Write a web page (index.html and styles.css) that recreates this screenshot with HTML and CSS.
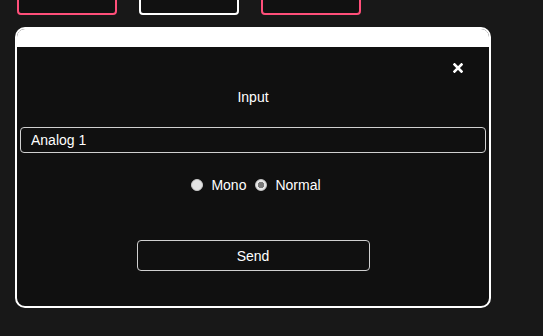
FILE: index.html
```html
<!DOCTYPE html>
<html lang="en">
<head>
    <meta charset="UTF-8">
    <meta name="viewport" content="width=device-width, initial-scale=1.0">
    <title>Input</title>
    <link rel="stylesheet" href="styles.css">
</head>
<body>

    <!-- Top tabs -->
    <nav class="tabs">
        <button class="tab"></button>
        <button class="tab active"></button>
        <button class="tab"></button>
    </nav>

    <!-- Input dialog -->
    <section class="modal">
        <div class="modal-header"></div>
        <div class="modal-body">
            <div class="close-row">
                <button class="close" aria-label="Close">
                    <svg width="10" height="10" viewBox="0 0 10 10">
                        <path d="M1.5 1.5 L8.5 8.5 M8.5 1.5 L1.5 8.5" stroke="#fff" stroke-width="2.6" stroke-linecap="square"/>
                    </svg>
                </button>
            </div>
            <p class="label">Input</p>
            <input type="text" class="field" value="Analog 1">
            <div class="radios">
                <label><input type="radio" name="mode" value="mono"> Mono</label>
                <label><input type="radio" name="mode" value="normal" checked> Normal</label>
            </div>
            <button class="send">Send</button>
        </div>
    </section>

</body>
</html>
```

FILE: styles.css
```css
/* General Styles */
body {
    margin: 0;
    font-family: 'Liberation Sans', Arial, sans-serif;
    font-size: 14px;
    background: #181818;
    color: #fff;
}

/* Tabs */
.tabs {
    display: flex;
    gap: 22px;
    margin-top: -20px;
    padding-left: 17px;
}

.tab {
    width: 100px;
    height: 35px;
    background-color: #111;
    border: 2px solid #ff4f7a;
    border-radius: 4px;
    padding: 0;
}

.tab.active {
    border-color: #fff;
}

/* Modal */
.modal {
    display: flex;
    flex-direction: column;
    width: 476px;
    height: 281px;
    box-sizing: border-box;
    margin: 12px 0 0 15px;
    border: 2px solid #fff;
    border-radius: 10px;
    background-color: #101010;
    overflow: hidden;
}

.modal-header {
    height: 18px;
    background-color: #fff;
}

.modal-body {
    flex: 1;
    display: flex;
    flex-direction: column;
    align-items: center;
    padding: 16px 3px 0;
}

.close-row {
    align-self: stretch;
    display: flex;
    justify-content: flex-end;
    padding-right: 23px;
}

.close {
    display: block;
    padding: 0;
    border: none;
    background: none;
    height: 10px;
    cursor: pointer;
}

.close svg {
    display: block;
}

.label {
    margin: 16px 0 0;
    line-height: 16px;
}

/* Form */
.field {
    align-self: stretch;
    box-sizing: border-box;
    height: 26px;
    margin-top: 22px;
    padding: 0 10px;
    font-family: inherit;
    font-size: 14px;
    color: #fff;
    background-color: #101010;
    border: 1px solid #d0d0d0;
    border-radius: 4px;
    outline: none;
}

.radios {
    display: flex;
    gap: 9px;
    margin-top: 24px;
    padding-left: 6px;
    line-height: 16px;
}

.radios label {
    display: flex;
    align-items: center;
    gap: 8px;
}

.radios input {
    appearance: none;
    width: 12px;
    height: 12px;
    margin: 0;
    border-radius: 50%;
    background-color: #e2e2e2;
    border: 1px solid #c8c8c8;
    box-sizing: border-box;
}

.radios input:checked {
    background: radial-gradient(circle, #7a7a7a 0 3px, #e8e8e8 3.5px);
}

.send {
    width: 233px;
    height: 31px;
    margin-top: 47px;
    font-family: inherit;
    font-size: 14px;
    color: #fff;
    background-color: #101010;
    border: 1px solid #d0d0d0;
    border-radius: 4px;
    cursor: pointer;
}
```
